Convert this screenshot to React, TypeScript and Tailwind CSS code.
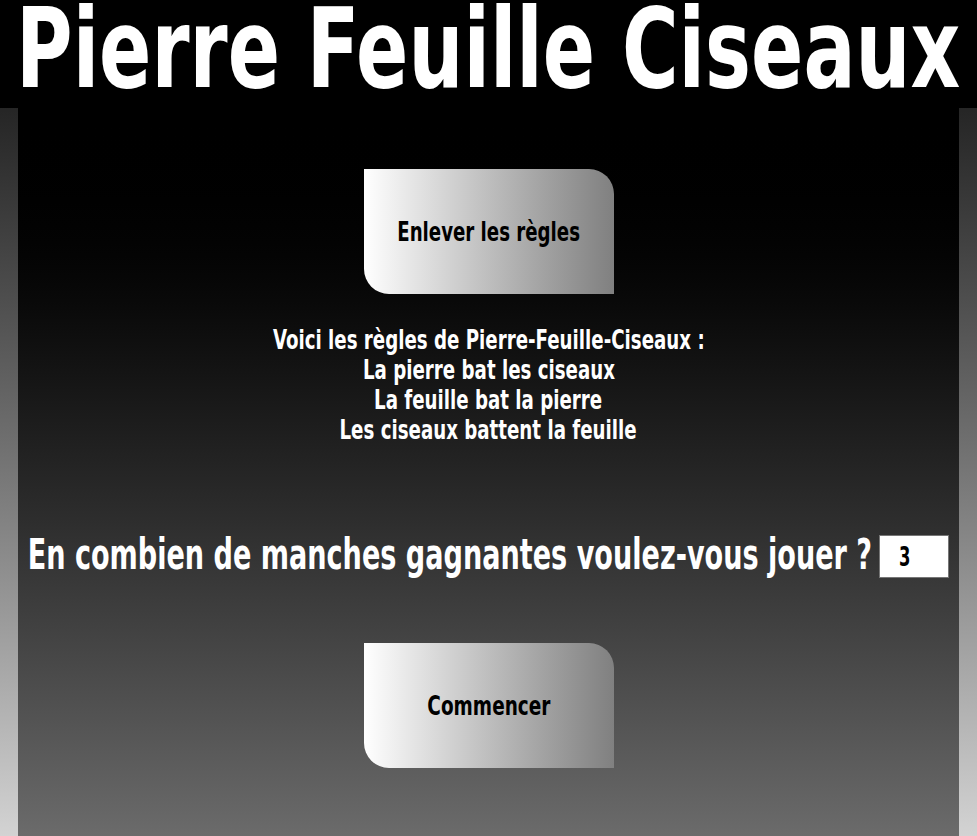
const impact = "font-['Impact','DejaVu_Sans_Condensed',sans-serif] font-bold"

// Impact isn't installed, so the condensed face is squeezed sideways to the
// same width; the outer box keeps the width the text takes on screen.
function Squeeze({ box, inner, children }: { box: string; inner: string; children: React.ReactNode }) {
  return (
    <span className={`flex justify-center overflow-visible ${box}`}>
      <span className={`shrink-0 whitespace-nowrap ${impact} ${inner}`}>{children}</span>
    </span>
  )
}

export default function App() {
  return (
    <div className="min-h-[836px] h-[836px] overflow-hidden bg-gradient-to-b from-[#111111] to-[#d3d3d3] flex flex-col">
      <header className="h-[108px] shrink-0 bg-black flex items-start justify-center pt-[10px]">
        <h1>
          <Squeeze box="w-[941px]" inner="text-white text-[88px] leading-[78px] scale-x-[0.975] scale-y-[1.25]">
            Pierre Feuille Ciseaux
          </Squeeze>
        </h1>
      </header>

      <main className="mx-[18px] flex-1 overflow-hidden bg-gradient-to-b from-black to-[#6b6b6b] flex flex-col items-center pt-[61px]">
        <button className="w-[250px] h-[125px] rounded-tr-[25px] rounded-bl-[25px] bg-gradient-to-r from-white to-[#808080] flex items-center justify-center">
          <Squeeze box="w-[181px]" inner="text-black text-[26px] leading-[30px] scale-x-[0.777]">
            Enlever les règles
          </Squeeze>
        </button>

        <div className="mt-[31px] flex flex-col items-center text-white">
          <Squeeze box="w-[433px]" inner="text-[27px] leading-[30px] scale-x-[0.75]">
            Voici les règles de Pierre-Feuille-Ciseaux :
          </Squeeze>
          <Squeeze box="w-[272px]" inner="text-[27px] leading-[30px] scale-x-[0.75]">
            La pierre bat les ciseaux
          </Squeeze>
          <Squeeze box="w-[226px]" inner="text-[27px] leading-[30px] scale-x-[0.75]">
            La feuille bat la pierre
          </Squeeze>
          <Squeeze box="w-[292px]" inner="text-[27px] leading-[30px] scale-x-[0.75]">
            Les ciseaux battent la feuille
          </Squeeze>
        </div>

        <div className="mt-[90px] flex items-center gap-[7px] h-[43px]">
          <Squeeze box="w-[843px] text-white" inner="text-[42px] leading-[42px] scale-x-[0.717] -translate-y-[2px]">
            En combien de manches gagnantes voulez-vous jouer ?
          </Squeeze>
          <div className="w-[70px] h-[43px] bg-white border border-[#767676] flex items-center pl-[19px]">
            <span className={`${impact} text-black text-[26px] leading-none inline-block origin-left scale-x-[0.7]`}>3</span>
          </div>
        </div>

        <button className="mt-[65px] w-[250px] h-[125px] rounded-tr-[25px] rounded-bl-[25px] bg-gradient-to-r from-white to-[#808080] flex items-center justify-center">
          <Squeeze box="w-[123px]" inner="text-black text-[26px] leading-[30px] scale-x-[0.79]">
            Commencer
          </Squeeze>
        </button>
      </main>
    </div>
  )
}
